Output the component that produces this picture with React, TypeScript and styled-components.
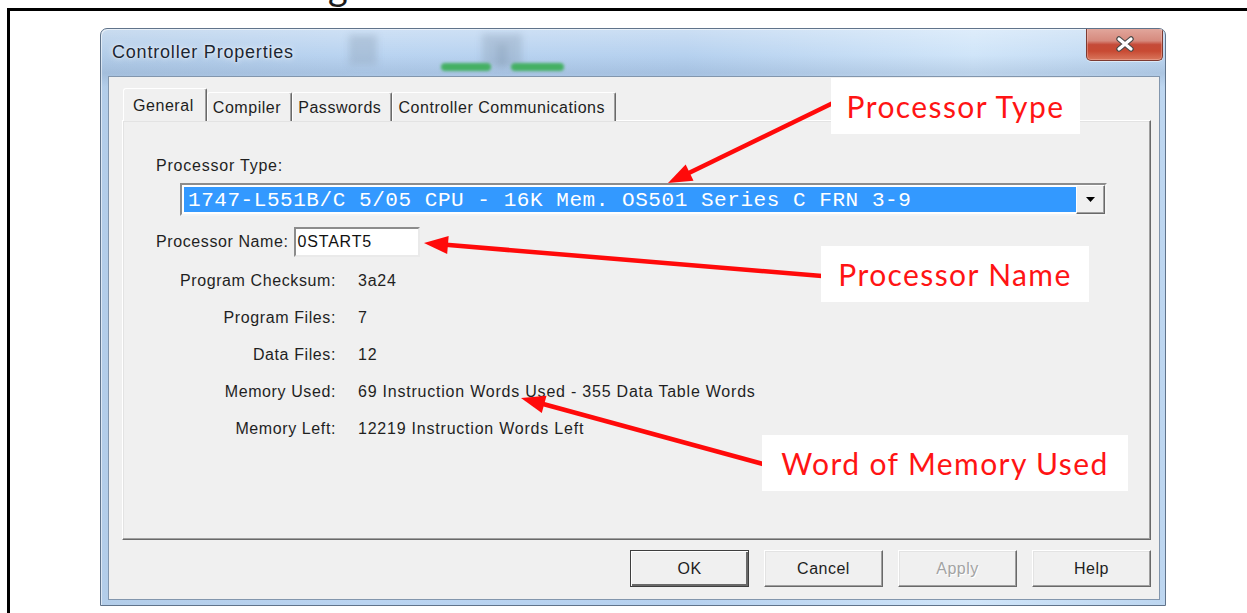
import React from "react";
import styled, { createGlobalStyle } from "styled-components";

const GlobalStyle = createGlobalStyle`
  * { box-sizing: border-box; }
  html, body { margin: 0; padding: 0; background: #fff; }
  body {
    width: 1247px;
    height: 613px;
    overflow: hidden;
    font-family: "Liberation Sans", Arial, sans-serif;
  }
`;

const Page = styled.div`
  position: relative;
  width: 1247px;
  height: 613px;
  overflow: hidden;
  background: #fff;
`;

/* Tail of the document heading above the figure frame */
const Caption = styled.div`
  height: 8px;
  overflow: hidden;
  padding-left: 328px;
  font-family: Lato, "Liberation Sans", sans-serif;
  font-size: 38px;
  line-height: 38px;
  color: #1c1c1c;
`;

const CaptionText = styled.span`
  display: block;
  margin-top: -34px;
`;

const Frame = styled.div`
  margin-left: 7px;
  height: 605px;
  border-top: 3px solid #000;
  border-left: 3px solid #000;
  padding: 17px 0 0 90px;
`;

const Window = styled.div`
  width: 1066px;
  height: 578px;
  display: flex;
  flex-direction: column;
  border: 1px solid #60738a;
  border-radius: 7px 7px 0 0;
  padding: 0 5px 5px 7px;
  background:
    linear-gradient(180deg, rgba(255,255,255,0.3) 0px, rgba(255,255,255,0) 26px, rgba(80,110,150,0.16) 44px, rgba(80,110,150,0) 58px),
    linear-gradient(90deg, #b3cde9 0%, #bad4f1 25%, #b6d1ef 55%, #d0e5f9 82%, #bdd6f0 100%);
  box-shadow: inset 1px 1px 0 rgba(255, 255, 255, 0.55);
`;

const TitleBar = styled.div`
  position: relative;
  height: 47px;
  margin: 0 -5px 0 -7px;
  padding: 0 2px 0 11px;
  display: flex;
  align-items: center;
  overflow: hidden;
  border-radius: 6px 6px 0 0;
`;

const GlassArt = styled.svg`
  position: absolute;
  left: 0;
  top: 0;
  pointer-events: none;
`;

const Title = styled.div`
  position: relative;
  flex: 1;
  font-size: 18px;
  letter-spacing: 0.8px;
  color: #1b2633;
  text-shadow: 0 0 6px rgba(255, 255, 255, 0.9), 0 0 2px rgba(255, 255, 255, 0.8);
`;

const CloseButton = styled.div`
  position: relative;
  align-self: flex-start;
  margin-top: -1px;
  width: 77px;
  height: 33px;
  display: flex;
  align-items: center;
  justify-content: center;
  border: 1px solid #7d3a31;
  border-top: none;
  border-radius: 0 0 5px 5px;
  background: linear-gradient(180deg, #e2a89e 0%, #d68a7e 40%, #c54a38 52%, #c84a33 72%, #d9775d 100%);
  box-shadow: inset 0 0 0 1px rgba(255, 210, 200, 0.35), 0 1px 0 rgba(255, 255, 255, 0.5);
`;

const Client = styled.div`
  flex: 1;
  display: flex;
  flex-direction: column;
  background: #f0f0f0;
  border: 1px solid #8296ad;
  padding: 11px 8px 12px 13px;
`;

const TabStrip = styled.div`
  position: relative;
  z-index: 1;
  height: 33px;
  margin-bottom: -1px;
  padding-left: 1px;
  display: flex;
  align-items: flex-end;
`;

const Tab = styled.div<{ $active?: boolean }>`
  height: ${(p) => (p.$active ? 33 : 29)}px;
  padding: ${(p) => (p.$active ? "2px 12px 0 9px" : "1px 10px 0 5px")};
  display: flex;
  align-items: center;
  font-size: 16px;
  letter-spacing: 0.55px;
  color: #1e1e1e;
  white-space: nowrap;
  background: #f0f0f0;
  border-top: 1px solid #fff;
  border-left: 1px solid #fff;
  border-right: 1px solid #696969;
  border-radius: 3px 2px 0 0;
  box-shadow: inset -1px 0 0 #a0a0a0;
`;

const Panel = styled.div`
  height: 420px;
  padding: 35px 0 0 33px;
  background: #f0f0f0;
  border-top: 1px solid #fff;
  border-left: 1px solid #fff;
  border-right: 1px solid #696969;
  border-bottom: 1px solid #696969;
  box-shadow: inset -1px -1px 0 #a0a0a0, inset 1px 1px 0 #e3e3e3;
`;

const Label = styled.div`
  height: 20px;
  line-height: 20px;
  font-size: 16px;
  letter-spacing: 0.78px;
  color: #1f1f1f;
  white-space: nowrap;
`;

const Combo = styled.div`
  width: 927px;
  height: 33px;
  margin: 7px 0 0 24px;
  display: flex;
  background: #fff;
  border: 2px solid;
  border-color: #8c8c8c #f4f4f4 #f4f4f4 #8c8c8c;
`;

const ComboValue = styled.div`
  flex: 1;
  margin: 2px 0 2px 2px;
  padding-left: 4px;
  height: 25px;
  line-height: 28px;
  overflow: hidden;
  white-space: nowrap;
  background: #3399ff;
  color: #fff;
  font-family: "Liberation Mono", "Courier New", monospace;
  font-size: 21px;
  letter-spacing: 0.55px;
`;

const DropButton = styled.div`
  width: 29px;
  display: flex;
  align-items: center;
  justify-content: center;
  background: #f0f0f0;
  border-top: 1px solid #fff;
  border-left: 1px solid #fff;
  border-right: 1px solid #696969;
  border-bottom: 1px solid #696969;
  box-shadow: inset -1px -1px 0 #a0a0a0;
`;

const NameRow = styled.div`
  margin-top: 11px;
  height: 30px;
  display: flex;
  align-items: center;
  gap: 5px;
`;

const NameLabel = styled(Label)`
  letter-spacing: 0.6px;
`;

const TextBox = styled.div`
  width: 126px;
  height: 30px;
  padding-left: 2px;
  line-height: 26px;
  font-size: 16px;
  letter-spacing: 0.8px;
  color: #111;
  background: #fff;
  border: 2px solid;
  border-color: #8c8c8c #eaeaea #eaeaea #8c8c8c;
`;

const InfoGrid = styled.div`
  margin-top: 14px;
  display: grid;
  grid-template-columns: 180px auto;
  column-gap: 22px;
  row-gap: 17px;
`;

const InfoLabel = styled(Label)`
  text-align: right;
  letter-spacing: 0.6px;
`;

const ButtonRow = styled.div`
  margin-top: 10px;
  display: flex;
  justify-content: flex-end;
  gap: 15px;
`;

const Button = styled.div<{ $default?: boolean; $disabled?: boolean }>`
  width: 119px;
  height: 37px;
  display: flex;
  align-items: center;
  justify-content: center;
  font-size: 16px;
  letter-spacing: 0.5px;
  color: ${(p) => (p.$disabled ? "#a3a3a3" : "#1e1e1e")};
  text-shadow: ${(p) => (p.$disabled ? "1px 1px 0 #fff" : "none")};
  background: #f0f0f0;
  border: 1px solid;
  border-color: ${(p) => (p.$default ? "#3f3f3f" : "#fff #696969 #696969 #fff")};
  box-shadow: ${(p) =>
    p.$default
      ? "inset 1px 1px 0 #fff, inset -2px -2px 0 #696969"
      : "inset -1px -1px 0 #a0a0a0, inset 1px 1px 0 #e3e3e3"};
`;

const Overlay = styled.svg`
  position: absolute;
  left: 0;
  top: 0;
  pointer-events: none;
`;

const Callout = styled.div<{ $x: number; $y: number; $w: number }>`
  position: absolute;
  left: ${(p) => p.$x}px;
  top: ${(p) => p.$y}px;
  width: ${(p) => p.$w}px;
  height: 56px;
  display: flex;
  align-items: center;
  justify-content: center;
  background: #fff;
  font-family: Lato, "Open Sans", sans-serif;
  font-size: 30px;
  letter-spacing: 1.4px;
  color: #ff1414;
  white-space: nowrap;
`;

type Pt = [number, number];

function Arrow({ from, to }: { from: Pt; to: Pt }) {
  const [sx, sy] = from;
  const [tx, ty] = to;
  const len = Math.hypot(tx - sx, ty - sy);
  const ux = (tx - sx) / len;
  const uy = (ty - sy) / len;
  const head = 24;
  const half = 9;
  const bx = tx - ux * head;
  const by = ty - uy * head;
  const nx = -uy;
  const ny = ux;
  const points = `${tx},${ty} ${bx + nx * half},${by + ny * half} ${bx - nx * half},${by - ny * half}`;
  return (
    <g>
      <line x1={sx} y1={sy} x2={bx + ux * 2} y2={by + uy * 2} stroke="#ff0a0a" strokeWidth={4.5} />
      <polygon points={points} fill="#ff0a0a" />
    </g>
  );
}

const info: [string, string][] = [
  ["Program Checksum:", "3a24"],
  ["Program Files:", "7"],
  ["Data Files:", "12"],
  ["Memory Used:", "69 Instruction Words Used - 355 Data Table Words"],
  ["Memory Left:", "12219 Instruction Words Left"],
];

export default function App() {
  return (
    <Page>
      <GlobalStyle />
      <Caption>
        <CaptionText>g</CaptionText>
      </Caption>
      <Frame>
        <Window>
          <TitleBar>
            <GlassArt width="1064" height="47" viewBox="0 0 1064 47">
              <defs>
                <filter id="blurWide" x="-50%" y="-50%" width="200%" height="200%">
                  <feGaussianBlur stdDeviation="3.5" />
                </filter>
                <filter id="blurSoft" x="-20%" y="-80%" width="140%" height="260%">
                  <feGaussianBlur stdDeviation="1.4" />
                </filter>
              </defs>
              <g filter="url(#blurWide)" fill="#8ea2b8" opacity="0.4">
                <rect x="248" y="6" width="28" height="30" />
                <rect x="381" y="5" width="40" height="32" />
                <rect x="395" y="14" width="12" height="24" fill="#6f8398" />
              </g>
              <g filter="url(#blurSoft)" fill="#45b064">
                <rect x="340" y="34" width="50" height="8" rx="4" />
                <rect x="410" y="34" width="53" height="8" rx="4" />
              </g>
            </GlassArt>
            <Title>Controller Properties</Title>
            <CloseButton>
              <svg width="22" height="16" viewBox="0 0 22 16">
                <path d="M5 3 L17 13 M17 3 L5 13" stroke="#4a4a4a" strokeWidth="5.5" strokeLinecap="round" />
                <path d="M5 3 L17 13 M17 3 L5 13" stroke="#fff" strokeWidth="3.2" strokeLinecap="round" />
              </svg>
            </CloseButton>
          </TitleBar>
          <Client>
            <TabStrip>
              <Tab $active>General</Tab>
              <Tab>Compiler</Tab>
              <Tab>Passwords</Tab>
              <Tab>Controller Communications</Tab>
            </TabStrip>
            <Panel>
              <Label>Processor Type:</Label>
              <Combo>
                <ComboValue>1747-L551B/C 5/05 CPU - 16K Mem. OS501 Series C FRN 3-9</ComboValue>
                <DropButton>
                  <svg width="9" height="5" viewBox="0 0 9 5">
                    <path d="M0 0 H9 L4.5 5 Z" fill="#000" />
                  </svg>
                </DropButton>
              </Combo>
              <NameRow>
                <NameLabel>Processor Name:</NameLabel>
                <TextBox>0START5</TextBox>
              </NameRow>
              <InfoGrid>
                {info.map(([k, v]) => (
                  <React.Fragment key={k}>
                    <InfoLabel>{k}</InfoLabel>
                    <Label>{v}</Label>
                  </React.Fragment>
                ))}
              </InfoGrid>
            </Panel>
            <ButtonRow>
              <Button $default>OK</Button>
              <Button>Cancel</Button>
              <Button $disabled>Apply</Button>
              <Button>Help</Button>
            </ButtonRow>
          </Client>
        </Window>
      </Frame>

      <Overlay width="1247" height="613" viewBox="0 0 1247 613">
        <Arrow from={[833, 103]} to={[668, 183]} />
        <Arrow from={[822, 276]} to={[424, 243]} />
        <Arrow from={[763, 464]} to={[521, 398]} />
      </Overlay>
      <Callout $x={831} $y={78} $w={249}>Processor Type</Callout>
      <Callout $x={821} $y={246} $w={268}>Processor Name</Callout>
      <Callout $x={762} $y={435} $w={366}>Word of Memory Used</Callout>
    </Page>
  );
}
